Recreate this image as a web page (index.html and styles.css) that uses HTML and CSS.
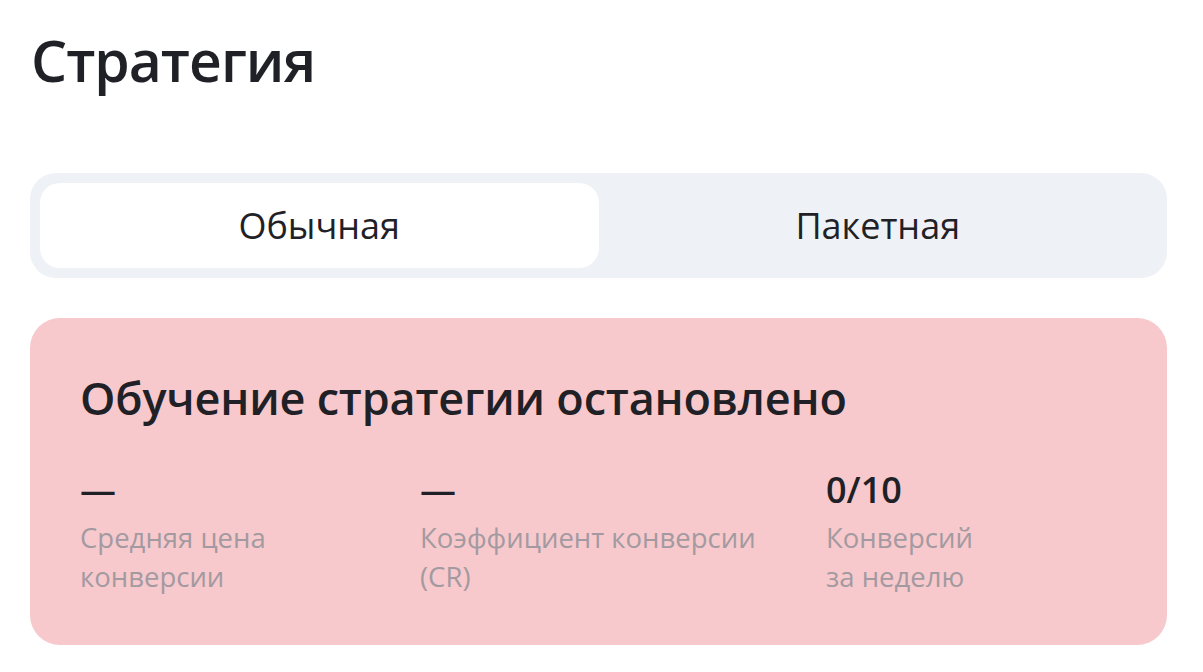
FILE: index.html
```html
<!DOCTYPE html>
<html lang="ru">
<head>
<meta charset="utf-8">
<link rel="stylesheet" href="styles.css">
</head>
<body>
<main class="page">
  <h1 class="title">Стратегия</h1>
  <div class="segmented">
    <button class="seg seg-active">Обычная</button>
    <button class="seg">Пакетная</button>
  </div>
  <section class="alert">
    <h2 class="alert-title">Обучение стратегии остановлено</h2>
    <div class="stats">
      <div class="stat">
        <div class="stat-value">—</div>
        <div class="stat-label">Средняя цена<br>конверсии</div>
      </div>
      <div class="stat">
        <div class="stat-value">—</div>
        <div class="stat-label">Коэффициент конверсии<br>(CR)</div>
      </div>
      <div class="stat">
        <div class="stat-value">0/10</div>
        <div class="stat-label">Конверсий<br>за неделю</div>
      </div>
    </div>
  </section>
</main>
</body>
</html>
```
FILE: styles.css
```css
* { box-sizing: border-box; }
html, body { margin: 0; padding: 0; background: #ffffff; }
body {
  font-family: "Open Sans", "Noto Sans", sans-serif;
  color: #1f2127;
}
.page {
  padding: 20px 36px 0 30px;
  display: flex;
  flex-direction: column;
}
.title {
  margin: 0 0 0 1px;
  font-size: 57px;
  font-weight: 600;
  line-height: 80px;
  letter-spacing: -1px;
}
.segmented {
  margin-top: 73px;
  height: 105px;
  background: #eef1f5;
  border-radius: 26px;
  padding: 10px;
  display: grid;
  grid-template-columns: 1fr 1fr;
}
.seg {
  border: 0;
  background: transparent;
  font-family: inherit;
  font-size: 36px;
  color: #1f2127;
  border-radius: 20px;
  padding: 0;
  cursor: pointer;
}
.seg-active {
  background: #ffffff;
}
.alert {
  margin-top: 40px;
  height: 327px;
  background: #f7c9cc;
  border-radius: 30px;
  padding: 50px 50px 0 50px;
}
.alert-title {
  margin: 0;
  font-size: 45px;
  font-weight: 600;
  line-height: 60px;
  letter-spacing: -0.2px;
}
.stats {
  margin-top: 42px;
  display: grid;
  grid-template-columns: 340px 406px auto;
}
.stat-value {
  font-size: 36px;
  font-weight: 600;
  line-height: 40px;
}
.stat-label {
  margin-top: 8px;
  font-size: 27.5px;
  line-height: 39px;
  color: #a39aa1;
}
```
